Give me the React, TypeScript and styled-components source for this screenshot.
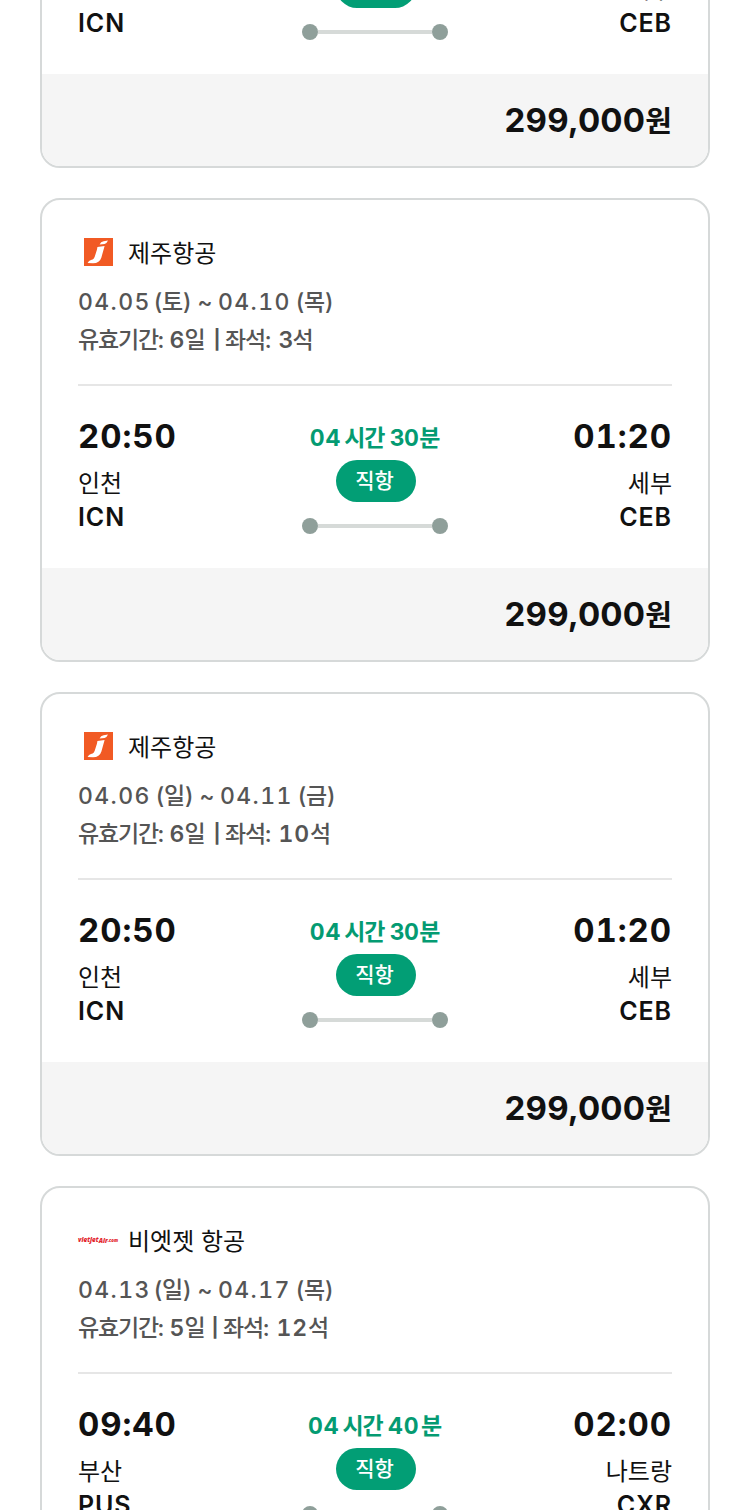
import React from 'react';
import styled, { createGlobalStyle } from 'styled-components';

const Global = createGlobalStyle`
  * { box-sizing: border-box; }
  body { margin: 0; background: #fff; color: #111; font-family: Inter, "Noto Sans CJK KR", sans-serif; }
`;
const Page = styled.main`
  height: 1510px;
  overflow: hidden;
  padding: 0 40px;
`;
const List = styled.div`
  display: flex;
  flex-direction: column;
  gap: 30px;
  margin-top: -296px;
`;
const Card = styled.article`
  flex: none;
  height: 464px;
  border: 2px solid #d6d9d9;
  border-radius: 20px;
  overflow: hidden;
`;
const Body = styled.div`
  height: 368px;
  padding: 34px 36px 0;
`;
const Airline = styled.div`
  display: flex;
  align-items: center;
  gap: 10px;
  height: 36px;
`;
const Logo = styled.span`
  display: flex;
  justify-content: center;
  width: 40px;
  svg { display: block; overflow: visible; }
`;
const Name = styled.span`
  padding-top: 3px;
  font-size: 24px;
  line-height: 36px;
`;
const Info = styled.div`
  height: 116px;
  padding-top: 13px;
  border-bottom: 2px solid #e6e6e6;
  color: #555;
  font-size: 23px;
  font-weight: 500;
  line-height: 38px;
`;
const Line = styled.div`
  display: flex;
  white-space: pre;
`;
const Run = styled.span<{ $w?: number; $ls?: number }>`
  flex: none;
  width: ${(p) => (p.$w ? `${p.$w}px` : 'auto')};
  letter-spacing: ${(p) => p.$ls ?? 0}px;
  font-variant-numeric: tabular-nums;
`;
const Digits = styled.b<{ $ls?: number }>`
  font-weight: 600;
  letter-spacing: ${(p) => p.$ls ?? 0}px;
`;
const Divider = styled.b`
  flex: none;
  width: 12.5px;
  padding-left: 1px;
  font-size: 19px;
  font-weight: 700;
`;
const Route = styled.div`
  display: flex;
  justify-content: space-between;
  padding-top: 30px;
`;
const Stop = styled.div<{ $end?: boolean }>`
  width: 150px;
  text-align: ${(p) => (p.$end ? 'right' : 'left')};
`;
const Time = styled.div`
  font-size: 33px;
  font-weight: 700;
  font-variant-numeric: tabular-nums;
  letter-spacing: 0.9px;
  line-height: 41px;
`;
const City = styled.div`
  margin-top: 10px;
  font-size: 24px;
  line-height: 34px;
`;
const Code = styled.div`
  margin-top: -1px;
  font-size: 25px;
  font-weight: 600;
  line-height: 34px;
  letter-spacing: 0.9px;
`;
const Middle = styled.div`
  display: flex;
  flex-direction: column;
  align-items: center;
`;
const Duration = styled.div`
  display: flex;
  height: 44px;
  color: #049b72;
  font-size: 23px;
  font-weight: 700;
  line-height: 44px;
  white-space: pre;
`;
const Badge = styled.div`
  width: 80px;
  height: 42px;
  margin-left: 2px;
  padding-right: 3px;
  border-radius: 21px;
  background: #029e75;
  color: #fff;
  font-size: 21px;
  font-weight: 500;
  line-height: 42px;
  text-align: center;
`;
const Track = styled.div`
  display: flex;
  align-items: center;
  width: 146px;
  height: 16px;
  margin-top: 16px;
`;
const Dot = styled.i`
  width: 16px;
  height: 16px;
  border-radius: 50%;
  background: #8f9f9a;
`;
const Rail = styled.i`
  flex: 1;
  height: 4px;
  background: #d6dad8;
`;
const Price = styled.div`
  display: flex;
  justify-content: flex-end;
  height: 92px;
  padding-right: 36px;
  background: #f5f5f5;
  font-size: 33px;
  font-weight: 700;
  letter-spacing: 0.15px;
  line-height: 93px;
`;
const Won = styled.span`
  padding-top: 1px;
  font-size: 29px;
`;

const JejuLogo = () => (
  <svg width="29" height="28" viewBox="0 0 29 28">
    <rect width="29" height="28" fill="#f15a24" />
    <path d="M13.4 8.9 20.6 7.9 17.4 19.4Q15.6 25.2 9 25.2L3.6 25Q4.8 22.4 7 21.9L8.6 21.5Q10 21.1 10.7 18.8L13 11.4Z" fill="#fff" />
    <path d="M15.6 6.6Q16.7 3.8 19.6 3.3L24 2.5Q22.6 5.7 20.6 6.1Z" fill="#fff" />
  </svg>
);
const VietjetLogo = () => (
  <svg width="40" height="12" viewBox="0 0 40 12" fontFamily="Open Sans, sans-serif" fontStyle="italic" fontWeight="800" fill="#e3262e">
    <text x="0" y="8.2" fontSize="7.5" textLength="40" lengthAdjust="spacingAndGlyphs">
      vietjet<tspan dy="1" fontSize="7.5">Air</tspan><tspan dy="-1" fontSize="5.2">.com</tspan>
    </text>
  </svg>
);

interface Flight {
  vietjet?: boolean;
  airline: string;
  start: string;
  startDay: string;
  startWidth: number;
  end: string;
  endDay: string;
  days: string;
  daysWidth: number;
  seats: string;
  depart: [string, string, string];
  arrive: [string, string, string];
  minutes: string;
}

const jeju: Flight = {
  airline: '제주항공',
  start: '04.05', startDay: '(토)', startWidth: 75.5,
  end: '04.10', endDay: '(목)',
  days: '6', daysWidth: 43, seats: '3',
  depart: ['20:50', '인천', 'ICN'],
  arrive: ['01:20', '세부', 'CEB'],
  minutes: '30',
};
const flights: Flight[] = [
  jeju,
  jeju,
  { ...jeju, start: '04.06', startDay: '(일)', startWidth: 77.5, end: '04.11', endDay: '(금)', seats: '10' },
  {
    ...jeju, vietjet: true, airline: '비엣젯 항공',
    start: '04.13', startDay: '(일)', end: '04.17',
    days: '5', daysWidth: 41, seats: '12',
    depart: ['09:40', '부산', 'PUS'],
    arrive: ['02:00', '나트랑', 'CXR'],
    minutes: '40',
  },
];

const FlightCard = ({ f }: { f: Flight }) => {
  const wide = f.minutes === '40';
  return (
    <Card>
      <Body>
        <Airline>
          <Logo>{f.vietjet ? <VietjetLogo /> : <JejuLogo />}</Logo>
          <Name>{f.airline}</Name>
        </Airline>
        <Info>
          <Line>
            <Run $w={f.startWidth} $ls={1.4}>{f.start}</Run>
            <Run $w={44} $ls={-0.5}>{f.startDay}</Run>
            <Run $w={20.5}>~</Run>
            <Run $w={77.5} $ls={1.4}>{f.end}</Run>
            <Run $ls={-0.5}>{f.endDay}</Run>
          </Line>
          <Line>
            <Run $w={91.5} $ls={-1.2}>유효기간:</Run>
            <Run $w={f.daysWidth}><Digits>{f.days}</Digits>일</Run>
            <Divider>|</Divider>
            <Run $w={53.5} $ls={-1.2}>좌석:</Run>
            <Run $ls={-0.5}><Digits $ls={f.seats.length > 1 ? 0.9 : -0.8}>{f.seats}</Digits>석</Run>
          </Line>
        </Info>
        <Route>
          <Stop><Time>{f.depart[0]}</Time><City>{f.depart[1]}</City><Code>{f.depart[2]}</Code></Stop>
          <Middle>
            <Duration>
              <Run $w={34.5} $ls={0.9}>04</Run>
              <Run $w={45.5} $ls={-1}>시간</Run>
              <Run $w={wide ? 33 : 29.5} $ls={wide ? 1 : -0.6}>{f.minutes}</Run>
              <Run>분</Run>
            </Duration>
            <Badge>직항</Badge>
            <Track><Dot /><Rail /><Dot /></Track>
          </Middle>
          <Stop $end><Time>{f.arrive[0]}</Time><City>{f.arrive[1]}</City><Code>{f.arrive[2]}</Code></Stop>
        </Route>
      </Body>
      <Price>299,000<Won>원</Won></Price>
    </Card>
  );
};

export default function App() {
  return (
    <>
      <Global />
      <Page>
        <List>
          {flights.map((f, i) => <FlightCard key={i} f={f} />)}
        </List>
      </Page>
    </>
  );
}
